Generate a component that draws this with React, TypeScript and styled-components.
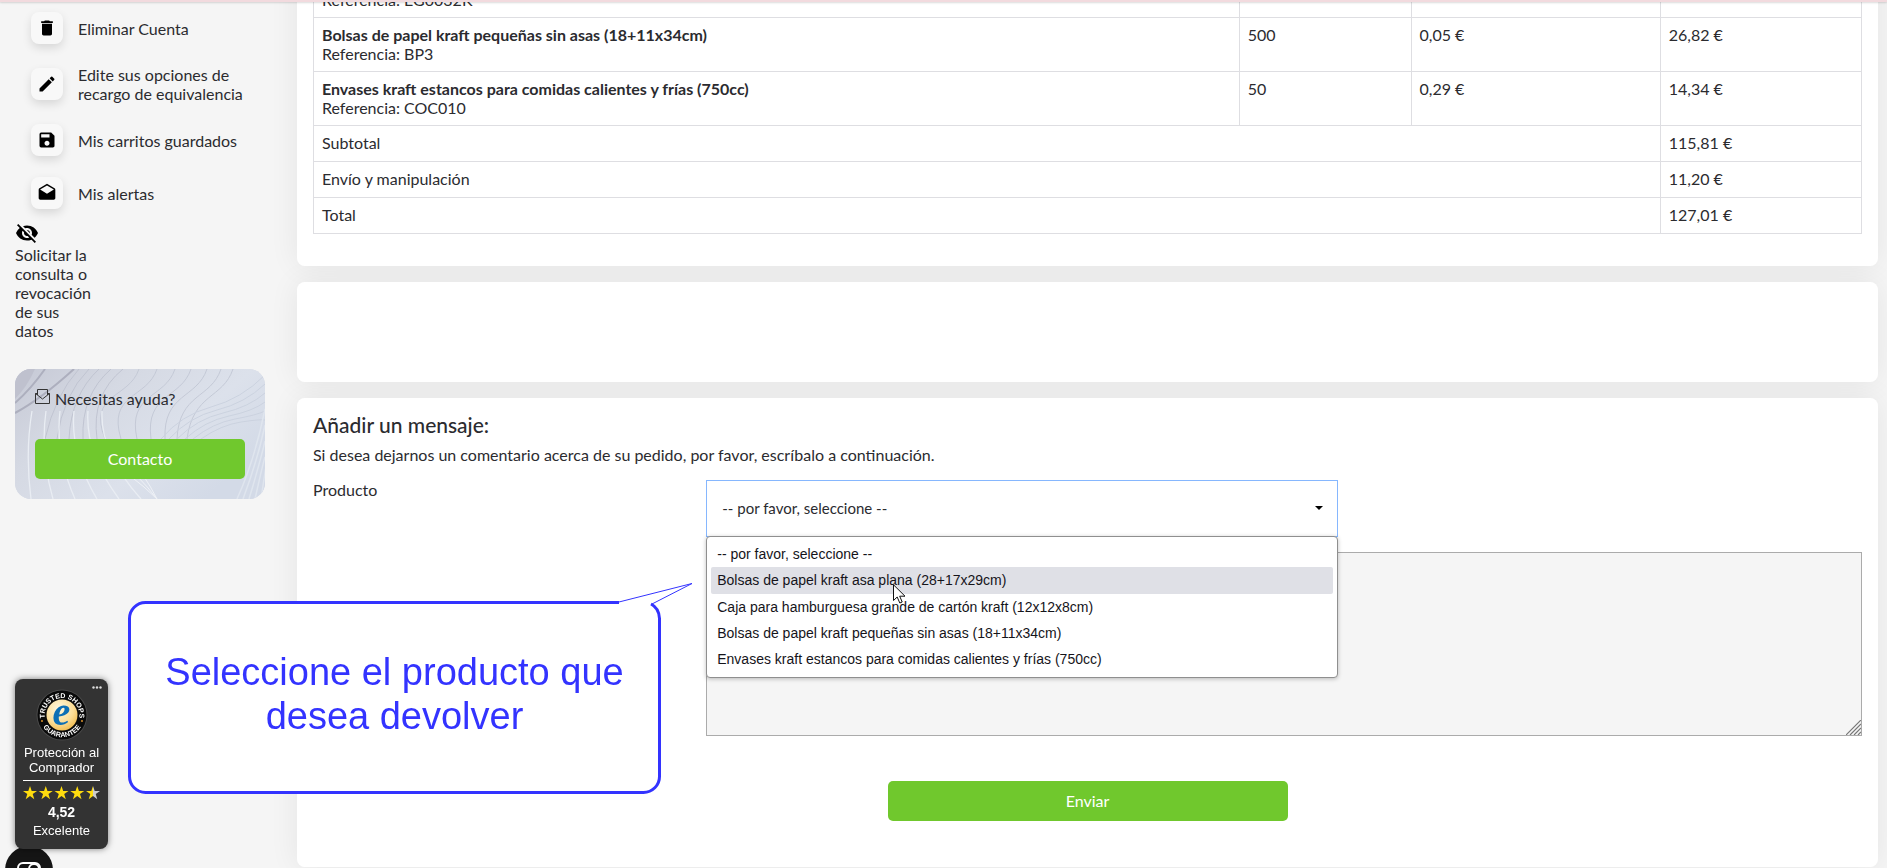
import React from "react";
import styled, { createGlobalStyle } from "styled-components";
import { MdDelete, MdDrafts, MdEdit, MdSave, MdVisibilityOff } from "react-icons/md";

const GlobalStyle = createGlobalStyle`
  *, *::before, *::after { box-sizing: border-box; }
  body {
    margin: 0;
    background: #f5f5f5;
    color: #2b2b2f;
    font-family: Lato, "Open Sans", sans-serif;
    font-size: 16px;
    line-height: 19px;
  }
  button, select, textarea { font: inherit; color: inherit; }
`;

const Page = styled.div`
  display: grid;
  grid-template-columns: 297px minmax(0, 1fr);
  min-height: 100vh;
  padding-right: 9px;
  overflow: clip;
`;

const TopBar = styled.div`
  position: fixed;
  inset: 0 0 auto;
  height: 2px;
  background: #f2dade;
  box-shadow: 0 1px 2px rgba(0, 0, 0, 0.15);
  z-index: 5;
`;

/* ---------- Sidebar ---------- */

const Sidebar = styled.aside`
  padding: 1px 32px 0 15px;
`;

const Menu = styled.nav`
  display: flex;
  flex-direction: column;
  padding-left: 16px;
`;

const MenuLink = styled.a`
  display: flex;
  align-items: center;
  gap: 15px;
  padding: 11px 0 10px;
  color: inherit;
  text-decoration: none;
`;

const IconTile = styled.span`
  display: grid;
  place-items: center;
  flex: none;
  width: 32px;
  height: 32px;
  border-radius: 8px;
  background: #f8f8f8;
  color: #000;
  font-size: 20px;
  box-shadow: 0 4px 10px rgba(0, 0, 0, 0.12);
`;

const PrivacyLink = styled.a`
  display: block;
  width: 80px;
  margin-top: 2px;
  color: inherit;
  text-decoration: none;

  svg {
    display: block;
    color: #000;
  }
`;

const HelpCard = styled.section`
  position: relative;
  margin-top: 29px;
  padding: 20px;
  border-radius: 16px;
  overflow: hidden;
  background: #d7dbe5;
`;

const HelpArt = styled.svg`
  position: absolute;
  inset: 0;
  width: 100%;
  height: 100%;
`;

const HelpTitle = styled.p`
  position: relative;
  display: flex;
  gap: 5px;
  margin: 0 0 31px;
`;

const GreenButton = styled.button<{ $width: string }>`
  position: relative;
  display: block;
  width: ${(p) => p.$width};
  max-width: 100%;
  height: 40px;
  margin: 0 auto;
  padding: 0 0 1px;
  border: 0;
  border-radius: 5px;
  background: #70c82d;
  color: #fff;
  cursor: pointer;
`;

/* ---------- Main column ---------- */

const Main = styled.main`
  display: flex;
  flex-direction: column;
  gap: 16px;
  isolation: isolate;
  margin-top: -53px;
`;

const Card = styled.section<{ $minHeight?: number }>`
  position: relative;
  min-height: ${(p) => p.$minHeight ?? 0}px;
  padding: 16px 16px 32px;
  border-radius: 8px;
  background: #fff;

  &::before {
    content: "";
    position: absolute;
    inset: 0;
    z-index: -1;
    border-radius: 8px;
    box-shadow: 0 0 30px rgba(0, 0, 0, 0.07);
  }
`;

const OrderTable = styled.table`
  width: 100%;
  table-layout: fixed;
  border-collapse: collapse;

  td {
    height: 36px;
    padding: 7px 8px 8px;
    border: 1px solid #dedee2;
    vertical-align: top;
  }
`;

const Col = styled.col<{ $w: string }>`
  width: ${(p) => p.$w};
`;

const ProductName = styled.strong`
  display: block;
  font-weight: 700;
`;

const Heading = styled.h2`
  margin: 0 0 9px;
  font-size: 21px;
  line-height: 22px;
  font-weight: 500;
`;

const Intro = styled.p`
  margin: 0 0 16px;
`;

const Form = styled.form`
  display: grid;
  grid-template-columns: repeat(12, minmax(0, 1fr));
  column-gap: 24px;
  row-gap: 15px;
`;

const FieldLabel = styled.label`
  grid-column: 1 / span 3;
`;

const SelectField = styled.div`
  position: relative;
  grid-column: 4 / span 5;
`;

const Select = styled.select`
  display: block;
  width: 100%;
  height: 57px;
  padding: 0 15px;
  border: 1px solid #86b7fe;
  border-radius: 0;
  outline: 0;
  background: #fff;
  font-size: 15px;
  appearance: none;
`;

const Caret = styled.svg`
  position: absolute;
  right: 15px;
  top: 26px;
  width: 8px;
  height: 4px;
  pointer-events: none;
`;

const Options = styled.ul`
  position: absolute;
  z-index: 2;
  top: 56px;
  left: 0;
  right: 0;
  display: flex;
  flex-direction: column;
  height: 142px;
  margin: 0;
  padding: 4px;
  border: 1px solid #8f8f8f;
  border-radius: 4px;
  background: #fff;
  box-shadow: 0 1px 4px rgba(0, 0, 0, 0.25);
  list-style: none;
  color: #15141a;
  font-family: "Liberation Sans", Arial, sans-serif;
  font-size: 14px;
`;

const Option = styled.li<{ $active?: boolean }>`
  flex: 1;
  display: flex;
  align-items: center;
  padding: 0 6px;
  border-radius: 2px;
  background: ${(p) => (p.$active ? "#dfe0e6" : "transparent")};
`;

const MessageField = styled.div`
  position: relative;
  grid-column: 4 / -1;
`;

const Message = styled.textarea`
  display: block;
  width: 100%;
  height: 184px;
  border: 1px solid #ababab;
  border-radius: 0;
  background: #f5f5f5;
  resize: none;
`;

const Grip = styled.svg`
  position: absolute;
  right: 1px;
  bottom: 1px;
  width: 15px;
  height: 15px;
`;

const SubmitRow = styled.div`
  grid-column: 1 / -1;
  padding: 30px 0 14px;
`;

/* ---------- Overlays ---------- */

const Callout = styled.div`
  position: fixed;
  z-index: 4;
  left: 128px;
  top: 582px;
  display: grid;
  place-items: center;
  width: 566px;
  height: 212px;
  padding: 12px 33px 0 0;
  color: #3333ff;
  font: 38px/44px "Liberation Sans", Arial, sans-serif;
  text-align: center;

  svg {
    position: absolute;
    inset: 0;
  }

  p {
    position: relative;
    width: 480px;
    margin: 0;
  }
`;

const Cursor = styled.svg`
  position: absolute;
  z-index: 3;
  left: 187px;
  top: 104px;
  width: 13px;
  height: 20px;
`;

const TrustBadge = styled.aside`
  position: fixed;
  z-index: 3;
  left: 15px;
  bottom: 19px;
  display: flex;
  flex-direction: column;
  align-items: center;
  width: 93px;
  height: 170px;
  padding: 10px 8px 0;
  border-radius: 8px;
  background: #333;
  color: #fff;
  box-shadow: 0 0 6px rgba(0, 0, 0, 0.5);
  font: 13px/15px "Liberation Sans", Arial, sans-serif;
  text-align: center;
`;

const Dots = styled.svg`
  position: absolute;
  top: 7px;
  right: 6px;
  width: 10px;
  height: 3px;
`;

const BadgeTitle = styled.span`
  padding: 4px 0 5px;
  white-space: nowrap;
`;

const Stars = styled.svg`
  width: 77px;
  height: 14px;
  margin: 5px 0 3px;
`;

const Rule = styled.span`
  width: 77px;
  height: 1px;
  background: #fff;
`;

const Score = styled.strong`
  font-size: 14px;
  line-height: 18px;
`;

const Rating = styled.span`
  line-height: 19px;
`;

const ChatButton = styled.button`
  position: fixed;
  z-index: 2;
  left: 5px;
  bottom: -26px;
  width: 48px;
  height: 48px;
  padding: 12px;
  border: 0;
  border-radius: 50%;
  background: #151515;

  svg {
    display: block;
  }
`;

const menuItems = [
  { icon: MdDelete, text: "Eliminar Cuenta" },
  { icon: MdEdit, text: "Edite sus opciones de recargo de equivalencia" },
  { icon: MdSave, text: "Mis carritos guardados" },
  { icon: MdDrafts, text: "Mis alertas" },
];

const products = [
  { name: "Caja para hamburguesa grande de cartón kraft (12x12x8cm)", ref: "EG0032K", qty: "", unit: "", total: "" },
  { name: "Bolsas de papel kraft pequeñas sin asas (18+11x34cm)", ref: "BP3", qty: "500", unit: "0,05 €", total: "26,82 €" },
  { name: "Envases kraft estancos para comidas calientes y frías (750cc)", ref: "COC010", qty: "50", unit: "0,29 €", total: "14,34 €" },
];

const totals = [
  ["Subtotal", "115,81 €"],
  ["Envío y manipulación", "11,20 €"],
  ["Total", "127,01 €"],
];

const options = [
  "-- por favor, seleccione --",
  "Bolsas de papel kraft asa plana (28+17x29cm)",
  "Caja para hamburguesa grande de cartón kraft (12x12x8cm)",
  "Bolsas de papel kraft pequeñas sin asas (18+11x34cm)",
  "Envases kraft estancos para comidas calientes y frías (750cc)",
];

const STAR = "M7 0l1.7 5H14L9.700 8.100 11.300 13.200 7 10.100 2.700 13.200 4.300 8.100 0 5h5.300z";

function HelpBackground() {
  return (
    <HelpArt viewBox="0 0 250 130" preserveAspectRatio="none" aria-hidden="true">
      <defs>
        <linearGradient id="helpFill" x1="0" y1="0" x2="1" y2="0.6">
          <stop offset="0" stopColor="#c6c9d5" />
          <stop offset="0.35" stopColor="#d5d9e3" />
          <stop offset="0.7" stopColor="#dce1eb" />
          <stop offset="1" stopColor="#d3dae7" />
        </linearGradient>
      </defs>
      <rect width="250" height="130" fill="url(#helpFill)" />
      <path d="M0 0H20Q12 18 0 30Z" fill="#bfc1ce" />
      <g fill="none">
        <path d="M0 44Q26 30 59 0M0 34Q16 20 30 0" stroke="#adafbe" strokeWidth="2" />
        {[64, 74, 84, 96, 108].map((x, i) => (
          <path key={x} d={`M${x} 0Q${x - 24 - i * 2} 26 ${x - 34 + i * 2} 70`} stroke="#c0c4d1" />
        ))}
        {[124, 142, 160, 176, 192, 206, 218].map((x, i) => (
          <path key={x} d={`M${x} 0C${x - 10} 30 ${x - 52 + i * 2} 24 ${x - 34 - i * 2} 70`} stroke="#c4c9d6" />
        ))}
        {[0, 1, 2, 3, 4, 5].map((i) => (
          <path key={i} d={`M${146 + i * 8} 70Q${166 + i * 8} ${46 + i * 2} ${196 + i * 6} ${38 + i * 3}T250 ${6 + i * 9}`} stroke="#cbd2df" />
        ))}
        {[0, 1, 2, 3, 4, 5].map((i) => (
          <path key={i} d={`M${17 + i * 14} 42Q${10 + i * 15} 84 ${16 + i * 22} 130`} stroke="#e9edf3" strokeWidth="1.300" />
        ))}
        {[0, 1, 2].map((i) => (
          <path key={i} d={`M${114 + i * 7} 106Q${130 + i * 3} 118 142 130`} stroke="#eef1f6" />
        ))}
        {[0, 1, 2, 3, 4].map((i) => (
          <path key={i} d={`M${222 + i * 6} 130Q${240 + i * 3} 90 250 ${40 + i * 16}`} stroke="#dfe5ee" strokeWidth="1.500" />
        ))}
      </g>
    </HelpArt>
  );
}

function TrustSeal() {
  return (
    <svg width="52" height="52" viewBox="0 0 52 52" role="img" aria-label="Trusted Shops">
      <defs>
        <radialGradient id="gold" cx="0.4" cy="0.3" r="0.8">
          <stop offset="0" stopColor="#fff8e0" />
          <stop offset="0.6" stopColor="#fbdc94" />
          <stop offset="1" stopColor="#efb53f" />
        </radialGradient>
        <path id="arcTop" d="M8.800 29A17.400 17.400 0 1 1 43.200 29" />
        <path id="arcBottom" d="M4 30A22.400 22.400 0 0 0 48 30" />
      </defs>
      <circle cx="26" cy="26" r="25.500" fill="#4a4a4a" />
      <circle cx="26" cy="26" r="24.500" fill="#0a0a0a" />
      <circle cx="26" cy="26" r="15.500" fill="url(#gold)" />
      <text x="25.500" y="35.500" fill="#0d6fb5" fontFamily="Liberation Serif, serif" fontStyle="italic" fontWeight="700" fontSize="40" textAnchor="middle">e</text>
      <g fill="#fff" fontFamily="Liberation Sans, sans-serif" fontWeight="700" fontSize="7" textAnchor="middle">
        <text><textPath href="#arcTop" startOffset="50%">TRUSTED SHOPS</textPath></text>
        <text><textPath href="#arcBottom" startOffset="50%">GUARANTEE</textPath></text>
      </g>
      <circle cx="6" cy="32" r="0.900" fill="#f0a030" />
      <circle cx="46" cy="32" r="0.900" fill="#f0a030" />
    </svg>
  );
}

export default function App() {
  return (
    <>
      <GlobalStyle />
      <TopBar />
      <Page>
        <Sidebar>
          <Menu>
            {menuItems.map(({ icon: Icon, text }) => (
              <MenuLink href="#" key={text}>
                <IconTile><Icon /></IconTile>
                <span>{text}</span>
              </MenuLink>
            ))}
          </Menu>
          <PrivacyLink href="#">
            <MdVisibilityOff size={24} />
            Solicitar la consulta o revocación de sus datos
          </PrivacyLink>
          <HelpCard>
            <HelpBackground />
            <HelpTitle>
              <svg width="15" height="15" viewBox="0 0 15 15" fill="none" stroke="#333" aria-hidden="true">
                <path d="M2.500 4.500H.5v10h14v-10h-2M.5 4.500l7 5.500 7-5.500M2.500 6V.5h10V6" />
              </svg>
              Necesitas ayuda?
            </HelpTitle>
            <GreenButton type="button" $width="100%">Contacto</GreenButton>
          </HelpCard>
        </Sidebar>

        <Main>
          <Card>
            <OrderTable>
              <colgroup>
                <Col $w="59.8%" />
                <Col $w="11.1%" />
                <Col $w="16.1%" />
                <Col $w="13%" />
              </colgroup>
              <tbody>
                {products.map((p) => (
                  <tr key={p.ref}>
                    <td>
                      <ProductName>{p.name}</ProductName>
                      Referencia: {p.ref}
                    </td>
                    <td>{p.qty}</td>
                    <td>{p.unit}</td>
                    <td>{p.total}</td>
                  </tr>
                ))}
                {totals.map(([label, amount]) => (
                  <tr key={label}>
                    <td colSpan={3}>{label}</td>
                    <td>{amount}</td>
                  </tr>
                ))}
              </tbody>
            </OrderTable>
          </Card>

          <Card $minHeight={100} />

          <Card>
            <Heading>Añadir un mensaje:</Heading>
            <Intro>Si desea dejarnos un comentario acerca de su pedido, por favor, escríbalo a continuación.</Intro>
            <Form onSubmit={(e) => e.preventDefault()}>
              <FieldLabel htmlFor="producto">Producto</FieldLabel>
              <SelectField>
                <Select id="producto" defaultValue={options[0]}>
                  {options.map((o) => <option key={o}>{o}</option>)}
                </Select>
                <Caret viewBox="0 0 8 4" aria-hidden="true"><path d="M0 0h8L4 4z" /></Caret>
                <Options>
                  {options.map((o, i) => <Option key={o} $active={i === 1}>{o}</Option>)}
                </Options>
                <Cursor viewBox="0 0 13 20" aria-hidden="true">
                  <path d="M.5.800V16.500L4.200 13 6.800 19 9.200 18 6.700 12.200H12z" fill="#fff" stroke="#111" />
                </Cursor>
              </SelectField>
              <MessageField>
                <Message aria-label="Mensaje" />
                <Grip viewBox="0 0 15 15" stroke="#777" strokeWidth="1.200" aria-hidden="true">
                  <path d="M0 15L15 0M4 15L15 4M8 15L15 8M12 15L15 12" />
                </Grip>
              </MessageField>
              <SubmitRow>
                <GreenButton type="submit" $width="400px">Enviar</GreenButton>
              </SubmitRow>
            </Form>
          </Card>
        </Main>
      </Page>

      <Callout>
        <svg width="566" height="212" viewBox="0 0 566 212" aria-hidden="true">
          <path d="M491 20.500H17.500A16 16 0 0 0 1.500 36.500V194.500A16 16 0 0 0 17.500 210.500H515.500A16 16 0 0 0 531.500 194.500V36.500Q531 26 523 22L565 1.500L491 20.500Z" fill="#fff" />
          <path d="M491 20.500H17.500A16 16 0 0 0 1.500 36.500V194.500A16 16 0 0 0 17.500 210.500H515.500A16 16 0 0 0 531.500 194.500V36.500Q531 26 523 22" fill="none" stroke="#3333ff" strokeWidth="3" />
          <path d="M489 20.500L564 1.500L523 22.500" fill="none" stroke="#3333ff" />
        </svg>
        <p>Seleccione el producto que desea devolver</p>
      </Callout>

      <TrustBadge>
        <Dots viewBox="0 0 10 3" fill="#ddd" aria-hidden="true">
          <circle cx="1.500" cy="1.500" r="1.200" /><circle cx="5" cy="1.500" r="1.200" /><circle cx="8.500" cy="1.500" r="1.200" />
        </Dots>
        <TrustSeal />
        <BadgeTitle>Protección al<br />Comprador</BadgeTitle>
        <Rule />
        <Stars viewBox="0 0 77 14" role="img" aria-label="4,52 de 5 estrellas">
          <defs>
            <linearGradient id="half">
              <stop offset="0.5" stopColor="#ffdc0f" />
              <stop offset="0.5" stopColor="#ccc" />
            </linearGradient>
          </defs>
          {[0, 1, 2, 3, 4].map((i) => (
            <path key={i} d={STAR} transform={`translate(${i * 15.75} 0)`} fill={i === 4 ? "url(#half)" : "#ffdc0f"} />
          ))}
        </Stars>
        <Score>4,52</Score>
        <Rating>Excelente</Rating>
      </TrustBadge>

      <ChatButton type="button" aria-label="Chat">
        <svg width="24" height="24" viewBox="0 0 24 24" fill="none" stroke="#fff" strokeWidth="2" aria-hidden="true">
          <rect x="1" y="5" width="22" height="14" rx="5" />
          <circle cx="17" cy="11" r="5" />
        </svg>
      </ChatButton>
    </>
  );
}
